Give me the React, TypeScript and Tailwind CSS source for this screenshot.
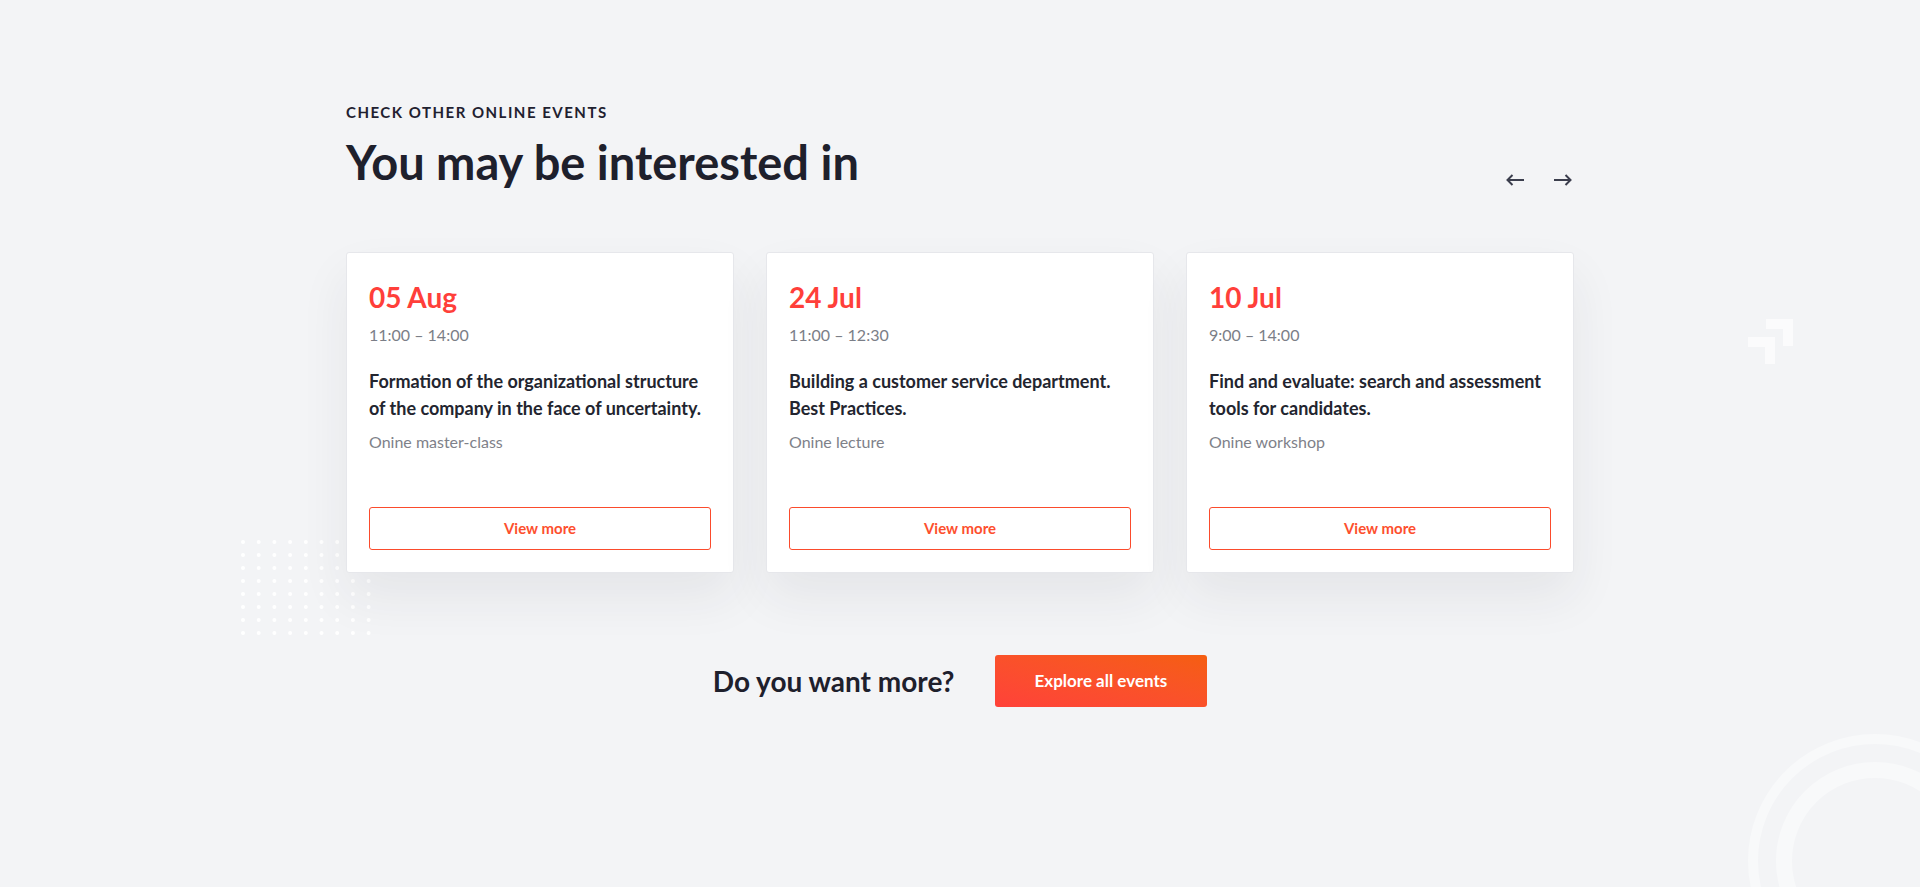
interface EventItem {
  date: string;
  time: string;
  title: string;
  kind: string;
}

const events: EventItem[] = [
  {
    date: "05 Aug",
    time: "11:00 – 14:00",
    title: "Formation of the organizational structure of the company in the face of uncertainty.",
    kind: "Onine master-class",
  },
  {
    date: "24 Jul",
    time: "11:00 – 12:30",
    title: "Building a customer service department. Best Practices.",
    kind: "Onine lecture",
  },
  {
    date: "10 Jul",
    time: "9:00 – 14:00",
    title: "Find and evaluate: search and assessment tools for candidates.",
    kind: "Onine workshop",
  },
];

// background dot grid, left side
function Dots() {
  const cols = Array.from({ length: 9 });
  const rows = Array.from({ length: 8 });
  return (
    <svg className="absolute left-[240px] top-[539px]" width="134" height="100" viewBox="0 0 134 100">
      {rows.map((_, r) =>
        cols.map((_, c) => (
          <circle key={`${r}-${c}`} cx={3 + c * 15.7} cy={3 + r * 13} r="2" fill="#ffffff" />
        ))
      )}
    </svg>
  );
}

function Corners() {
  return (
    <svg className="absolute left-[1746px] top-[317px]" width="50" height="50" viewBox="0 0 50 50">
      <path d="M20 2H47V29H37V12H20Z" fill="#fbfbfc" />
      <path d="M2 20H29V47H19V30H2Z" fill="#fbfbfc" />
    </svg>
  );
}

function Rings() {
  return (
    <svg className="absolute left-[1740px] top-[726px]" width="180" height="161" viewBox="0 0 180 161">
      <circle cx="135" cy="135" r="122" fill="none" stroke="#f8f9fa" strokeWidth="10" />
      <circle cx="135" cy="135" r="91" fill="none" stroke="#f8f9fa" strokeWidth="16" />
    </svg>
  );
}

function Arrow({ dir }: { dir: "left" | "right" }) {
  return (
    <svg width="18" height="12" viewBox="0 0 18 12" fill="none" stroke="#3b3e4d" strokeWidth="2">
      {dir === "left" ? (
        <path d="M1.5 6H18M6.5 1L1.5 6L6.5 11" />
      ) : (
        <path d="M0 6H16.5M11.5 1L16.5 6L11.5 11" />
      )}
    </svg>
  );
}

function EventCard({ item }: { item: EventItem }) {
  return (
    <div className="flex h-[321px] flex-col rounded-[3px] border border-[#e6e7eb] bg-white px-[22px] pt-[23px] pb-[22px] shadow-[0_24px_50px_rgba(40,45,60,0.07)]">
      <div className="text-[28px] font-bold leading-[42px] text-[#ff3f3a]">{item.date}</div>
      <div className="mt-[5px] text-[16px] leading-[24px] text-[#7b7e87]">{item.time}</div>
      <div className="mt-[21px] text-[18px] font-bold leading-[27px] text-[#23252f]">{item.title}</div>
      <div className="mt-[9px] text-[16px] leading-[22px] text-[#7e8189]">{item.kind}</div>
      <button className="mt-auto h-[43px] w-full rounded-[3px] border border-[#fb4b2c] text-[15px] font-bold text-[#fd4f2d]">
        View more
      </button>
    </div>
  );
}

export default function App() {
  return (
    <div className="relative h-[887px] overflow-hidden bg-[#f3f4f6] font-['Lato','Noto_Sans',sans-serif]">
      <Dots />
      <Corners />
      <Rings />

      <div className="relative mx-auto w-[1228px] pt-[103px]">
        {/* heading */}
        <div className="flex items-end justify-between">
          <div>
            <p className="text-[15px] font-bold uppercase leading-[18px] tracking-[1.5px] text-[#1f2130]">
              Check other online events
            </p>
            <h2 className="mt-[13px] text-[47px] font-bold leading-[56px] text-[#1e202c]">
              You may be interested in
            </h2>
          </div>
          <div className="mb-[4px] flex items-center gap-[30px] pr-[2px]">
            <Arrow dir="left" />
            <Arrow dir="right" />
          </div>
        </div>

        {/* cards */}
        <div className="mt-[62px] grid grid-cols-3 gap-[32px]">
          {events.map((item) => (
            <EventCard key={item.date} item={item} />
          ))}
        </div>

        {/* bottom cta */}
        <div className="mt-[82px] flex items-center justify-center gap-[40px]">
          <span className="text-[28px] font-bold text-[#1e202c]">Do you want more?</span>
          <button className="h-[52px] rounded-[3px] bg-linear-to-tr from-[#ff4139] to-[#f55e10] px-[40px] text-[17px] font-bold text-white">
            Explore all events
          </button>
        </div>
      </div>
    </div>
  );
}
